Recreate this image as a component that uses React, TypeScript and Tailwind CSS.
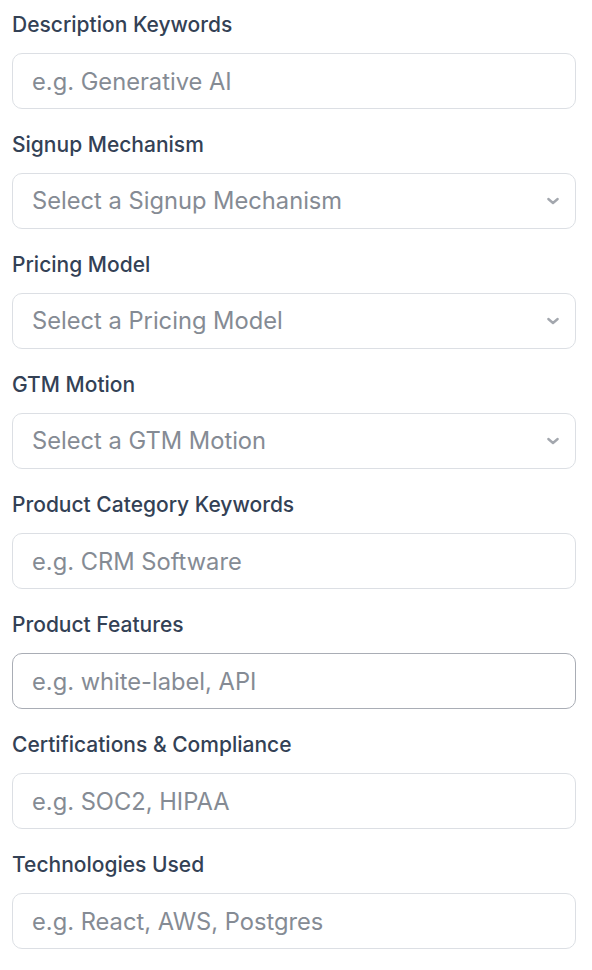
import React from 'react';

type Field =
  | { kind: 'input'; label: string; placeholder: string; hover?: boolean }
  | { kind: 'select'; label: string; placeholder: string };

const fields: Field[] = [
  { kind: 'input', label: 'Description Keywords', placeholder: 'e.g. Generative AI' },
  { kind: 'select', label: 'Signup Mechanism', placeholder: 'Select a Signup Mechanism' },
  { kind: 'select', label: 'Pricing Model', placeholder: 'Select a Pricing Model' },
  { kind: 'select', label: 'GTM Motion', placeholder: 'Select a GTM Motion' },
  { kind: 'input', label: 'Product Category Keywords', placeholder: 'e.g. CRM Software' },
  { kind: 'input', label: 'Product Features', placeholder: 'e.g. white-label, API', hover: true },
  { kind: 'input', label: 'Certifications & Compliance', placeholder: 'e.g. SOC2, HIPAA' },
  { kind: 'input', label: 'Technologies Used', placeholder: 'e.g. React, AWS, Postgres' },
];

function Chevron() {
  return (
    <svg className="w-[16px] h-[16px] text-[#a3a7ae]" viewBox="0 0 24 24" fill="none" stroke="currentColor">
      <path strokeLinecap="round" strokeLinejoin="round" strokeWidth={3.5} d="M5 9l7 6 7-6" />
    </svg>
  );
}

export default function App() {
  return (
    <div
      className="bg-white min-h-[970px] pl-[12px] pr-[16px] pt-[11px] flex flex-col gap-[22px]"
      style={{ fontFamily: 'Inter, "Noto Sans", sans-serif' }}
    >
      {fields.map(f => (
        <div key={f.label} className="flex flex-col gap-[14px]">
          <label className="text-[21px] leading-[28px] font-medium text-[#334155]">
            {f.label}
          </label>
          {f.kind === 'input' ? (
            <input
              placeholder={f.placeholder}
              className={`h-[56px] w-full rounded-[10px] border bg-white px-[19px] text-[23.7px] text-[#1f2937] placeholder:text-[#858b94] outline-none ${
                f.hover ? 'border-[#a9adb5]' : 'border-[#dcdfe4]'
              }`}
            />
          ) : (
            <button className="h-[56px] w-full rounded-[10px] border border-[#dcdfe4] bg-white pl-[19px] pr-[14px] flex items-center justify-between text-left">
              <span className="text-[23.7px] text-[#858b94]">{f.placeholder}</span>
              <Chevron />
            </button>
          )}
        </div>
      ))}
    </div>
  );
}
